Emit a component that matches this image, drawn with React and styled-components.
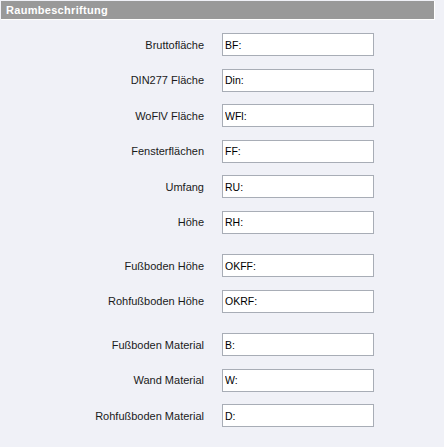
import styled, { createGlobalStyle } from "styled-components";

const GlobalStyle = createGlobalStyle`
  html, body {
    margin: 0;
    padding: 0;
    background: #f0f1f7;
  }
  body {
    font-family: "Liberation Sans", Arial, sans-serif;
    font-size: 11px;
    color: #000;
  }
`;

const Panel = styled.section`
  width: 444px;
  height: 447px;
  padding-top: 1px;
  box-sizing: border-box;
`;

const Header = styled.h2`
  margin: 0 0 0 1px;
  width: 434px;
  height: 19px;
  box-sizing: border-box;
  background: #999999;
  border-right: 1px solid #ffffff;
  border-bottom: 1px solid #ffffff;
  color: #ffffff;
  font-size: 11px;
  font-weight: bold;
  letter-spacing: 0.3px;
  line-height: 18px;
  padding-left: 5px;
`;

const Form = styled.form`
  display: flex;
  flex-direction: column;
  gap: 20.5px;
  padding-top: 13px;
`;

const Group = styled.div`
  display: flex;
  flex-direction: column;
  gap: 12.5px;
`;

const Row = styled.div`
  display: flex;
  align-items: center;
`;

const Label = styled.label`
  width: 204px;
  text-align: right;
  margin-right: 18px;
  white-space: nowrap;
  color: #1a1a1a;
`;

const Field = styled.input`
  width: 152px;
  height: 23px;
  box-sizing: border-box;
  margin: 0;
  padding: 0 2px;
  border: 1px solid #a8adb6;
  background: #ffffff;
  font-family: "Liberation Sans", Arial, sans-serif;
  font-size: 10.5px;
  color: #000;
  outline: none;
`;

const groups = [
  [
    ["Bruttofläche", "BF:"],
    ["DIN277 Fläche", "Din:"],
    ["WoFlV Fläche", "WFl:"],
    ["Fensterflächen", "FF:"],
    ["Umfang", "RU:"],
    ["Höhe", "RH:"],
  ],
  [
    ["Fußboden Höhe", "OKFF:"],
    ["Rohfußboden Höhe", "OKRF:"],
  ],
  [
    ["Fußboden Material", "B:"],
    ["Wand Material", "W:"],
    ["Rohfußboden Material", "D:"],
  ],
];

export default function App() {
  return (
    <>
      <GlobalStyle />
      <Panel>
        <Header>Raumbeschriftung</Header>
        <Form onSubmit={(e) => e.preventDefault()}>
          {groups.map((rows, gi) => (
            <Group key={gi}>
              {rows.map(([label, value]) => (
                <Row key={label}>
                  <Label>{label}</Label>
                  <Field type="text" defaultValue={value} />
                </Row>
              ))}
            </Group>
          ))}
        </Form>
      </Panel>
    </>
  );
}
